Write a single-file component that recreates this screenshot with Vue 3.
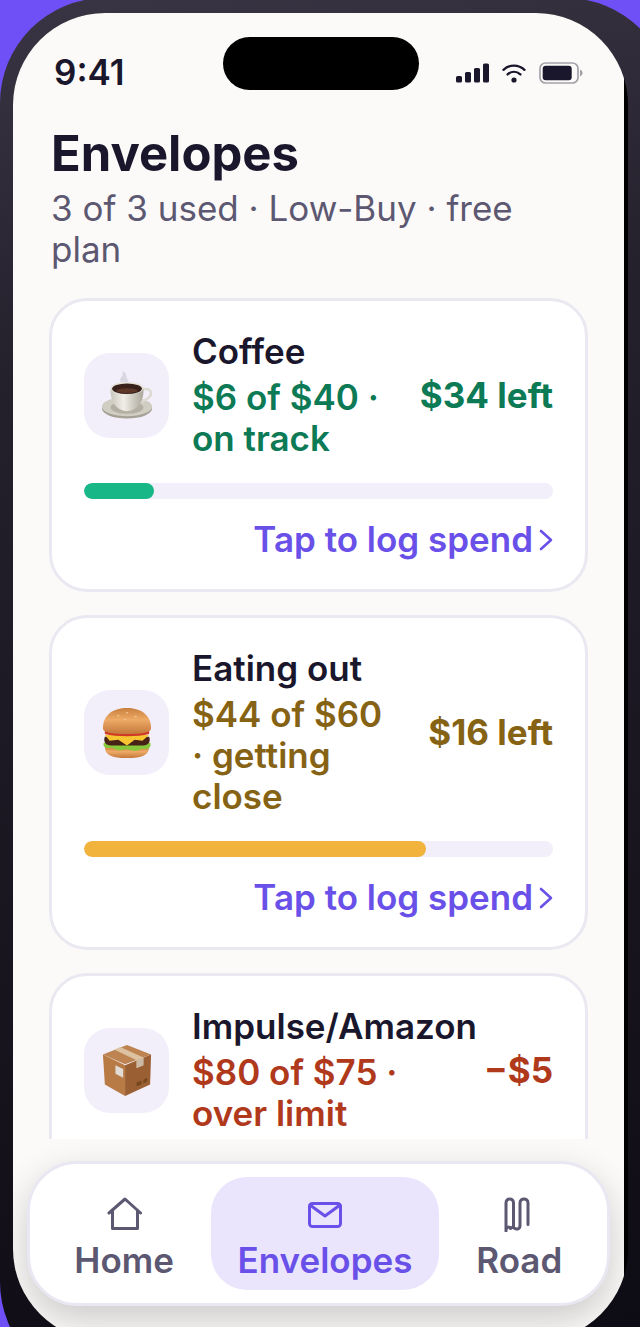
<template>
  <div class="stage">
    <div class="phone">
      <div class="screen">
        <div class="island"></div>
        <div class="app">
          <div class="status-bar">
            <span class="time">9:41</span>
            <div class="status-icons">
              <svg class="signal" viewBox="0 0 33 20" fill="currentColor">
                <rect x="0" y="13" width="6" height="6.5" rx="1.5" />
                <rect x="9" y="9" width="6" height="10.5" rx="1.5" />
                <rect x="18" y="5" width="6" height="14.5" rx="1.5" />
                <rect x="27" y="0.5" width="6" height="19" rx="1.5" />
              </svg>
              <svg class="wifi" viewBox="0 0 24 20" fill="none" stroke="currentColor" stroke-width="2.4" stroke-linecap="round">
                <path d="M1.5 6.8C7.5 1.2 16.5 1.2 22.5 6.8" />
                <path d="M5.6 11.4C9.5 8 14.5 8 18.4 11.4" />
                <circle cx="12" cy="17" r="2.6" fill="currentColor" stroke="none" />
              </svg>
              <svg class="battery" viewBox="0 0 44 22" fill="none">
                <rect x="1" y="1" width="38" height="20" rx="5.5" stroke="#a4a2a8" stroke-width="1.7" />
                <rect x="3.7" y="3.7" width="29" height="14.6" rx="3" fill="currentColor" />
                <path d="M41 7.5c3.4 1.4 3.4 5.6 0 7z" fill="#a4a2a8" />
              </svg>
            </div>
          </div>

          <main class="content">
            <header class="heading">
              <h1>Envelopes</h1>
              <p>3 of 3 used · Low-Buy · free plan</p>
            </header>

            <section v-for="item in envelopes" :key="item.name" class="card" :class="item.status">
              <div class="card-row">
                <div class="card-icon">
                  <svg v-if="item.icon === 'coffee'" viewBox="0 0 54 54">
                    <defs>
                      <linearGradient id="cup" x1="0" x2="1">
                        <stop offset="0" stop-color="#c9c6bb" />
                        <stop offset="0.4" stop-color="#f0eee7" />
                        <stop offset="1" stop-color="#aaa69a" />
                      </linearGradient>
                    </defs>
                    <path d="M21 14c-4-5 4-6 1-12 7 3 2 6 7 11z" fill="#cfcfda" opacity="0.75" />
                    <ellipse cx="27" cy="41" rx="26" ry="10.5" fill="#a5a196" />
                    <ellipse cx="27" cy="39" rx="26" ry="10" fill="#d0cdc2" />
                    <ellipse cx="27" cy="40" rx="17" ry="6.5" fill="#b3afa3" />
                    <path d="M42 22c10-4 13 4 6 9-3 2-6 3-9 4" fill="none" stroke="#dcdad2" stroke-width="2.5" />
                    <path d="M10 20h34c1 12-5 23-17 24-12-1-18-12-17-24z" fill="url(#cup)" />
                    <ellipse cx="27" cy="20" rx="17" ry="6.5" fill="#e5e2d9" />
                    <ellipse cx="27" cy="20.5" rx="15.5" ry="5.4" fill="#39221b" />
                    <ellipse cx="27" cy="22.5" rx="11" ry="2.5" fill="#5d3727" />
                  </svg>
                  <svg v-else-if="item.icon === 'burger'" viewBox="0 0 54 54">
                    <defs>
                      <linearGradient id="bun" x1="0" y1="0" x2="0" y2="1">
                        <stop offset="0" stop-color="#c97f3d" />
                        <stop offset="0.45" stop-color="#eeaa67" />
                        <stop offset="1" stop-color="#c4783b" />
                      </linearGradient>
                    </defs>
                    <path d="M4 41c0 9 7 12 23 12s23-3 23-12z" fill="url(#bun)" />
                    <path d="M3 37c-2 4 3 7 8 5 6 4 11 3 16 2 6 2 11 2 16-1 5 2 10-1 8-6z" fill="#86c83a" />
                    <path d="M4 31h46c2 5-1 9-6 9H10c-5 0-8-4-6-9z" fill="#472217" />
                    <path d="M4 29h46l-7 6-8-1-8 6-9-6-9 1z" fill="#f8c532" />
                    <path d="M4 24h46v4c-12 3-34 3-46 0z" fill="#cf3826" />
                    <path d="M2 22C2 8 13 1 27 1s25 7 25 21c0 5-12 6-25 6S2 27 2 22z" fill="url(#bun)" />
                    <g fill="#f3c18a">
                      <ellipse cx="18" cy="9" rx="1.4" ry="0.8" />
                      <ellipse cx="27" cy="6" rx="1.4" ry="0.8" />
                      <ellipse cx="36" cy="10" rx="1.4" ry="0.8" />
                      <ellipse cx="25" cy="13" rx="1.4" ry="0.8" />
                    </g>
                  </svg>
                  <svg v-else viewBox="0 0 54 54">
                    <path d="M2 11 27 1l25 10-27 10z" fill="#bd8350" />
                    <path d="M2 11l23 11v32L4 42z" fill="#b97b45" />
                    <path d="M25 22 52 11l-1 31-26 12z" fill="#9a6033" />
                    <path d="M14 6l6-3 24 11v8l-7 3v-8z" fill="#dcc2a0" />
                    <path d="M37 17l7-3v8l-7 3z" fill="#cbbba6" />
                    <path d="M15 22l8 4v9l-8-4z" fill="#e1dcd6" />
                    <path d="M37 40l5-2v4l-5 2zM44 37l4-2v4l-4 2z" fill="#77461f" />
                  </svg>
                </div>
                <div class="card-text">
                  <h2>{{ item.name }}</h2>
                  <p>{{ item.detail }}</p>
                </div>
                <span class="amount">{{ item.amount }}</span>
              </div>
              <div class="track">
                <div class="fill" :style="{ width: item.percent + '%' }"></div>
              </div>
              <button type="button" class="log">
                Tap to log spend
                <svg viewBox="0 0 14 22" fill="none" stroke="currentColor" stroke-width="2.6" stroke-linecap="round" stroke-linejoin="round">
                  <path d="M2 2l10 9-10 9" />
                </svg>
              </button>
            </section>
          </main>

          <nav class="tabs">
            <a href="#home" class="tab">
              <svg viewBox="0 0 36 36">
                <path d="M3 17 19 3l15.500 14M6.500 14v18.500h25V14" />
              </svg>
              Home
            </a>
            <a href="#envelopes" class="tab active" aria-current="page">
              <svg viewBox="0 0 36 36">
                <rect x="2.500" y="7.500" width="31" height="23" rx="3" />
                <path d="M3 9l15 11L33 9" />
              </svg>
              Envelopes
            </a>
            <a href="#road" class="tab">
              <svg viewBox="0 0 36 36">
                <path d="M5 35V7c0-5.500 7.500-5.500 7.500 0v24.500M5 33.500c1.500-3 3-3 4.500-1 1.500-2 3-1.500 3.500-.5 3 2 6 1 6-2.500V7c0-5.500 8-5.500 8 0v21.500" />
              </svg>
              Road
            </a>
          </nav>
        </div>
      </div>
    </div>
  </div>
</template>

<script setup>
import { ref } from 'vue'

const envelopes = ref([
  { name: 'Coffee', icon: 'coffee', detail: '$6 of $40 · on track', amount: '$34 left', percent: 15, status: 'ok' },
  { name: 'Eating out', icon: 'burger', detail: '$44 of $60 · getting close', amount: '$16 left', percent: 73, status: 'warn' },
  { name: 'Impulse/Amazon', icon: 'box', detail: '$80 of $75 · over limit', amount: '−$5', percent: 100, status: 'over' }
])
</script>

<style>
body {
  margin: 0;
  background: #6f4ff6;
}
</style>

<style scoped>
.stage {
  height: 100vh;
  overflow: hidden;
  background: #6f4ff6;
  color: #1a172d;
  font-family: Inter, "Liberation Sans", sans-serif;
  font-size: 35px;
  line-height: 41px;
}

/* The frame runs past the top, right and bottom edges of the stage */
.phone {
  box-sizing: border-box;
  width: calc(100% + 31px);
  height: calc(100vh + 62px);
  margin-top: -2px;
  padding: 15px 43px 46px 13px;
  border-radius: 105px;
  background: linear-gradient(170deg, #3a3544 0%, #24202c 25%, #15121c 75%, #0c0a12 100%);
}

.screen {
  position: relative;
  height: 100%;
  overflow: hidden;
  border-radius: 92px;
  background: #000;
}

.app {
  box-sizing: border-box;
  display: flex;
  flex-direction: column;
  height: 100%;
  margin-right: 4px;
  padding-bottom: 35px;
  background: #fbfaf8;
}

.island {
  position: absolute;
  top: 24px;
  left: 50%;
  width: 196px;
  height: 53px;
  border-radius: 27px;
  background: #000;
  transform: translateX(-50%);
}

.status-bar {
  display: flex;
  align-items: center;
  justify-content: space-between;
  padding: 39px 41px 0;
}

.time {
  font-weight: 600;
}

.status-icons {
  display: flex;
  align-items: center;
  gap: 13px;
}

.signal {
  width: 33px;
  height: 20px;
}

.wifi {
  width: 24px;
  height: 20px;
}

.battery {
  width: 44px;
  height: 22px;
}

.content {
  flex: 1;
  min-height: 0;
  overflow: hidden;
  padding: 33px 36px 0;
}

.heading {
  padding: 0 2px 28px;
}

h1,
h2,
p {
  margin: 0;
}

h1 {
  margin-bottom: 6px;
  font-size: 49px;
  font-weight: 700;
  line-height: 56px;
}

.heading p {
  color: #5d5872;
}

.card {
  margin-bottom: 23px;
  padding: 30px 32px 29px;
  border: 3px solid #eae8f1;
  border-radius: 38px;
  background: #fff;
}

.card-row {
  display: flex;
  align-items: center;
  gap: 23px;
}

.card-icon {
  display: flex;
  flex: none;
  align-items: center;
  justify-content: center;
  width: 85px;
  height: 85px;
  border-radius: 26px;
  background: #f2effa;
}

.card-icon svg {
  width: 52px;
  height: 52px;
}

.card-text {
  flex: 1;
  min-width: 0;
}

h2 {
  margin-bottom: 5px;
  font-size: 35px;
  font-weight: 600;
  white-space: nowrap;
}

.card-text p {
  font-weight: 600;
}

.amount {
  flex: none;
  margin-left: 12px;
  font-weight: 700;
}

.ok p,
.ok .amount {
  color: #0c7a55;
}

.warn p,
.warn .amount {
  color: #866314;
}

.over p,
.over .amount {
  color: #b0391b;
}

.track {
  height: 16px;
  margin: 24px 0 20px;
  overflow: hidden;
  border-radius: 8px;
  background: #f2effa;
}

.fill {
  height: 100%;
  border-radius: 8px;
}

.ok .fill {
  background: #18b788;
}

.warn .fill {
  background: #f2b33d;
}

.over .fill {
  background: #d9532f;
}

.log {
  display: flex;
  align-items: center;
  gap: 6px;
  margin-left: auto;
  padding: 0;
  border: 0;
  background: none;
  color: #6950e8;
  font: inherit;
  font-weight: 600;
}

.log svg {
  width: 14px;
  height: 22px;
}

.tabs {
  position: relative;
  display: grid;
  grid-template-columns: 5fr 7fr 4.6fr;
  gap: 6px;
  margin: 22px 14px 0;
  padding: 13px;
  border: 3px solid #e9e7f2;
  border-radius: 50px;
  background: #fff;
  box-shadow: 0 14px 36px rgba(20, 20, 20, 0.2);
}

.tab {
  display: flex;
  flex-direction: column;
  align-items: center;
  gap: 8px;
  padding: 19px 0 9px;
  border-radius: 36px;
  color: #5d5872;
  font-weight: 600;
  text-decoration: none;
}

.tab.active {
  background: #eae5fd;
  color: #6950e8;
}

.tab svg {
  width: 36px;
  height: 36px;
  fill: none;
  stroke: currentColor;
  stroke-width: 3;
  stroke-linecap: round;
  stroke-linejoin: round;
}
</style>
